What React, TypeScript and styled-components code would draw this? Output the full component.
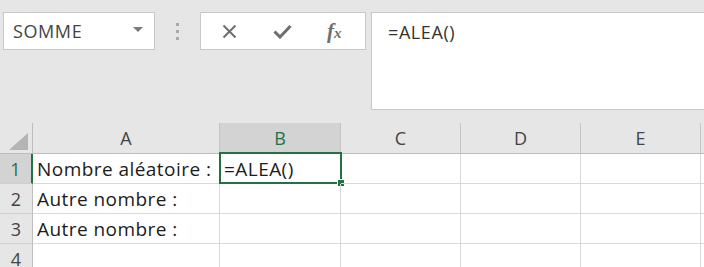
import styled, { createGlobalStyle } from "styled-components";

const GREEN = "#217346";

const GlobalStyle = createGlobalStyle`
  html, body {
    margin: 0;
    padding: 0;
    background: #e6e6e6;
    overflow: hidden;
  }
  body {
    font-family: "Open Sans", "Liberation Sans", sans-serif;
  }
`;

const columns = ["A", "B", "C", "D", "E", ""];
const rows: string[][] = [
  ["Nombre aléatoire :", "=ALEA()", "", "", "", ""],
  ["Autre nombre :", "", "", "", "", ""],
  ["Autre nombre :", "", "", "", "", ""],
  ["", "", "", "", "", ""],
];

export default function App() {
  return (
    <>
      <GlobalStyle />
      <Page>
        <Toolbar>
          <NameBox>
            <span>SOMME</span>
            <Caret />
          </NameBox>
          <Grip>
            <i />
            <i />
            <i />
          </Grip>
          <Buttons>
            <IconButton>
              <svg width="15" height="15" viewBox="0 0 15 15">
                <path d="M1.5 1.5 L13.5 13.5 M13.5 1.5 L1.5 13.5" stroke="#6e6e6e" strokeWidth="2" />
              </svg>
            </IconButton>
            <IconButton>
              <svg width="19" height="15" viewBox="0 0 19 15">
                <path d="M1.5 7.5 L7 13 L17.5 2" stroke="#6e6e6e" strokeWidth="3" fill="none" />
              </svg>
            </IconButton>
            <FxButton>
              f<small>x</small>
            </FxButton>
          </Buttons>
          <FormulaBar>=ALEA()</FormulaBar>
        </Toolbar>
        <Sheet>
          <Corner>
            <svg width="19" height="17" viewBox="0 0 19 17">
              <path d="M19 0 L19 17 L0 17 Z" fill="#b4b4b4" />
            </svg>
          </Corner>
          {columns.map((c, i) => (
            <ColHead key={"c" + i} $active={c === "B"}>
              {c}
            </ColHead>
          ))}
          {rows.map((r, ri) =>
            [
              <RowHead key={"h" + ri} $active={ri === 0}>
                {ri + 1}
              </RowHead>,
            ].concat(
              r.map((v, ci) => (
                <Cell key={ri + "-" + ci}>
                  {v}
                  {ri === 0 && ci === 1 && (
                    <Selection>
                      <Handle />
                    </Selection>
                  )}
                </Cell>
              ))
            )
          )}
        </Sheet>
      </Page>
    </>
  );
}

const Page = styled.div`
  width: 704px;
  height: 267px;
  overflow: hidden;
  background: #e6e6e6;
`;

const Toolbar = styled.div`
  height: 123px;
  display: flex;
  align-items: flex-start;
  padding: 12px 0 0 3px;
  box-sizing: border-box;
`;

const NameBox = styled.div`
  width: 152px;
  height: 38px;
  box-sizing: border-box;
  background: #fff;
  border: 1px solid #c8c8c8;
  display: flex;
  align-items: center;
  justify-content: space-between;
  padding: 0 11px 0 9px;
  font-size: 18px;
  letter-spacing: 0.6px;
  color: #444;
`;

const Caret = styled.div`
  width: 0;
  height: 0;
  border-left: 5px solid transparent;
  border-right: 5px solid transparent;
  border-top: 5px solid #7a7a7a;
  margin-top: -3px;
`;

const Grip = styled.div`
  width: 45px;
  height: 38px;
  display: flex;
  flex-direction: column;
  align-items: center;
  justify-content: center;
  gap: 4px;

  i {
    width: 3px;
    height: 3px;
    background: #a9a9a9;
  }
`;

const Buttons = styled.div`
  width: 166px;
  height: 38px;
  box-sizing: border-box;
  background: #fff;
  border: 1px solid #c8c8c8;
  display: flex;
  align-items: center;
  padding-left: 21px;
  gap: 36px;
`;

const IconButton = styled.div`
  display: flex;
  align-items: center;
  justify-content: center;
  height: 20px;
`;

const FxButton = styled.div`
  font-family: "Liberation Serif", serif;
  font-style: italic;
  font-weight: bold;
  font-size: 21px;
  line-height: 1;
  color: #6e6e6e;
  margin-left: -1px;

  small {
    font-size: 15px;
  }
`;

const FormulaBar = styled.div`
  margin-left: 5px;
  flex: 1;
  height: 98px;
  box-sizing: border-box;
  background: #fff;
  border: 1px solid #c8c8c8;
  border-right: none;
  padding: 7px 0 0 16px;
  font-size: 18px;
  letter-spacing: 0.6px;
  color: #333;
`;

const Sheet = styled.div`
  display: grid;
  grid-template-columns: 33px 187px 121px 120px 120px 120px 1fr;
  grid-template-rows: 31px repeat(4, 30px);
  background: #fff;
`;

const Corner = styled.div`
  background: #e6e6e6;
  border-right: 1px solid #bdbdbd;
  border-bottom: 1px solid #bdbdbd;
  display: flex;
  align-items: flex-end;
  justify-content: flex-end;
  padding: 0 4px 3px 0;
`;

const ColHead = styled.div<{ $active?: boolean }>`
  background: ${(p) => (p.$active ? "#d3d3d3" : "#e6e6e6")};
  border-right: 1px solid #c4c4c4;
  border-bottom: ${(p) => (p.$active ? `2px solid ${GREEN}` : "1px solid #bdbdbd")};
  display: flex;
  align-items: center;
  justify-content: center;
  font-size: 18px;
  color: ${(p) => (p.$active ? GREEN : "#444")};
`;

const RowHead = styled.div<{ $active?: boolean }>`
  background: ${(p) => (p.$active ? "#d3d3d3" : "#e6e6e6")};
  border-right: ${(p) => (p.$active ? `2px solid ${GREEN}` : "1px solid #bdbdbd")};
  border-bottom: 1px solid #d0d0d0;
  display: flex;
  align-items: center;
  justify-content: center;
  font-size: 18px;
  color: ${(p) => (p.$active ? GREEN : "#444")};
`;

const Cell = styled.div`
  position: relative;
  border-right: 1px solid #d9d9d9;
  border-bottom: 1px solid #d9d9d9;
  display: flex;
  align-items: center;
  padding-left: 4px;
  font-size: 19px;
  letter-spacing: 0.45px;
  color: #1c1c1c;
  white-space: nowrap;
`;

const Selection = styled.div`
  position: absolute;
  left: -1px;
  top: -2px;
  right: -2px;
  bottom: -1px;
  border: 2px solid ${GREEN};
`;

const Handle = styled.div`
  position: absolute;
  right: -5px;
  bottom: -5px;
  width: 6px;
  height: 6px;
  background: ${GREEN};
  border: 1px solid #fff;
`;
